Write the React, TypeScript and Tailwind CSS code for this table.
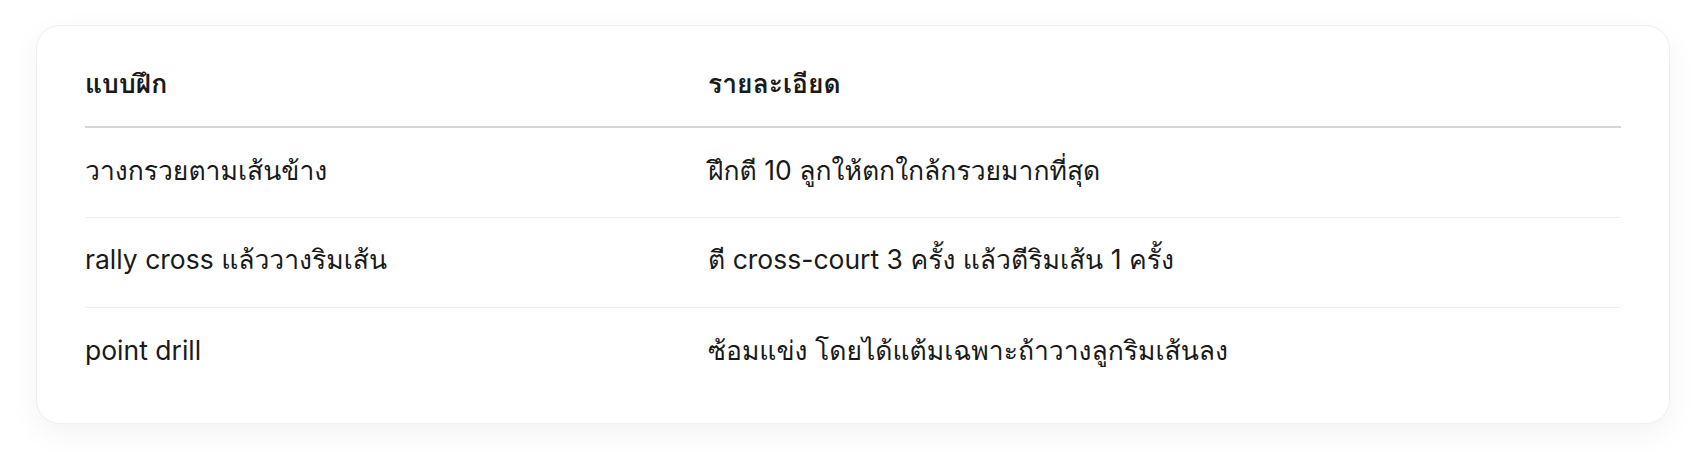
const DRILLS = [
  { name: "วางกรวยตามเส้นข้าง", detail: "ฝึกตี 10 ลูกให้ตกใกล้กรวยมากที่สุด" },
  { name: "rally cross แล้ววางริมเส้น", detail: "ตี cross-court 3 ครั้ง แล้วตีริมเส้น 1 ครั้ง" },
  { name: "point drill", detail: "ซ้อมแข่ง โดยได้แต้มเฉพาะถ้าวางลูกริมเส้นลง" },
];

export default function App() {
  return (
    <div
      className="min-h-[452px] bg-white px-[36px] pt-[25px] text-[#1a1a1a]"
      style={{ fontFamily: 'Inter, Loma, "Noto Sans", sans-serif' }}
    >
      <div className="rounded-3xl border-[1.5px] border-[#efefef] bg-white px-12 pt-4 pb-[26px] shadow-[0_10px_30px_rgba(0,0,0,0.05)]">
        <table className="w-full text-left text-[26.5px] leading-[1.4]">
          <thead>
            <tr className="border-b-2 border-[#d6d6d6]">
              <th className="h-[85px] w-[623px] p-0 font-bold">แบบฝึก</th>
              <th className="h-[85px] p-0 font-bold">รายละเอียด</th>
            </tr>
          </thead>
          <tbody>
            {DRILLS.map((d, i) => (
              <tr key={i} className={i < DRILLS.length - 1 ? "border-b-[1.5px] border-[#efefef]" : ""}>
                <td className="h-[90px] p-0 pb-1 font-normal">{d.name}</td>
                <td className="h-[90px] p-0 pb-1 font-normal">{d.detail}</td>
              </tr>
            ))}
          </tbody>
        </table>
      </div>
    </div>
  );
}
